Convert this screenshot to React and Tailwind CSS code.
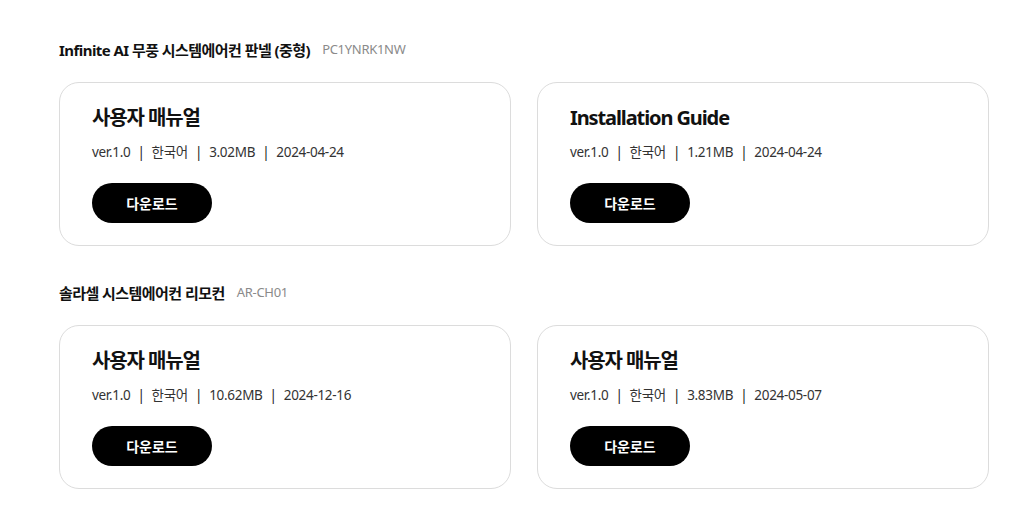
const sections = [
  {
    name: "Infinite AI 무풍 시스템에어컨 판넬 (중형)",
    model: "PC1YNRK1NW",
    docs: [
      { title: "사용자 매뉴얼", ver: "ver.1.0", lang: "한국어", size: "3.02MB", date: "2024-04-24" },
      { title: "Installation Guide", ver: "ver.1.0", lang: "한국어", size: "1.21MB", date: "2024-04-24" },
    ],
  },
  {
    name: "솔라셀 시스템에어컨 리모컨",
    model: "AR-CH01",
    docs: [
      { title: "사용자 매뉴얼", ver: "ver.1.0", lang: "한국어", size: "10.62MB", date: "2024-12-16" },
      { title: "사용자 매뉴얼", ver: "ver.1.0", lang: "한국어", size: "3.83MB", date: "2024-05-07" },
    ],
  },
];

function DocCard({ doc }) {
  return (
    <div className="rounded-[20px] border border-[#dcdcdc] bg-white pl-[32px] pt-[21px] pb-[22px]">
      <h3 className="text-[20px] leading-[28px] font-bold text-[#111] tracking-[-1.1px]">
        {doc.title}
      </h3>
      <p className="mt-[10px] text-[13.5px] leading-[20px] text-[#333] tracking-[-0.3px] flex items-center">
        <span>{doc.ver}</span>
        <span className="mx-[7px] text-[#222]">|</span>
        <span>{doc.lang}</span>
        <span className="mx-[7px] text-[#222]">|</span>
        <span>{doc.size}</span>
        <span className="mx-[7px] text-[#222]">|</span>
        <span>{doc.date}</span>
      </p>
      <button className="mt-[21px] h-[40px] w-[120px] rounded-full bg-black text-white text-[14px] font-bold">
        다운로드
      </button>
    </div>
  );
}

export default function App() {
  return (
    <div
      className="min-h-[520px] bg-white pt-[40px] pl-[59px]"
      style={{ fontFamily: '"Noto Sans", "Noto Sans CJK KR", sans-serif' }}
    >
      <div className="w-[930px]">
        {sections.map((s, i) => (
          <section key={i} className={i > 0 ? "mt-[37px]" : ""}>
            <div className="flex items-center h-[20px]">
              <span className="text-[15px] font-bold text-[#111] tracking-[-0.55px]">{s.name}</span>
              <span className="ml-[12px] text-[13px] text-[#8a8a8a] tracking-[-0.3px]">{s.model}</span>
            </div>
            <div className="mt-[22px] grid grid-cols-2 gap-[26px]">
              {s.docs.map((d, j) => (
                <DocCard key={j} doc={d} />
              ))}
            </div>
          </section>
        ))}
      </div>
    </div>
  );
}
